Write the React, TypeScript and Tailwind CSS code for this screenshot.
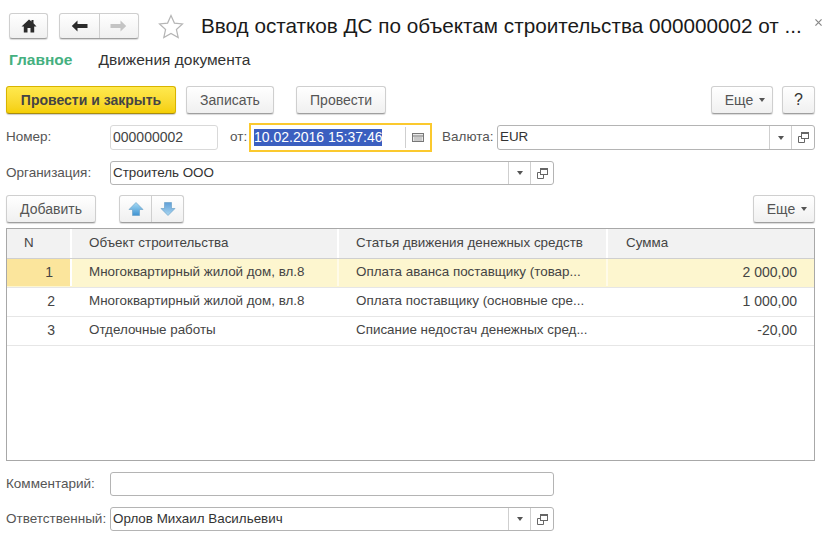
import { ReactNode } from "react";

const btn =
  "flex items-center justify-center h-full rounded-[3px] border border-[#cfcfcf] border-b-[#9f9f9f] bg-gradient-to-b from-white to-[#f0f0f0] shadow-[0_1px_1px_rgba(0,0,0,0.15)] text-[14px] text-[#555]";

const rows = [
  {
    n: "1",
    obj: "Многоквартирный жилой дом, вл.8",
    item: "Оплата аванса поставщику (товар...",
    sum: "2 000,00",
  },
  {
    n: "2",
    obj: "Многоквартирный жилой дом, вл.8",
    item: "Оплата поставщику (основные сре...",
    sum: "1 000,00",
  },
  {
    n: "3",
    obj: "Отделочные работы",
    item: "Списание недостач денежных сред...",
    sum: "-20,00",
  },
];

const Caret = () => (
  <svg width="6" height="4" viewBox="0 0 6 4" className="shrink-0">
    <path d="M0 0h6L3 4z" fill="#555" />
  </svg>
);

const OpenIcon = () => (
  <svg width="13" height="13" viewBox="0 0 13 13" fill="none" stroke="#666">
    <rect x="4.5" y="1.5" width="7" height="6" fill="#fff" />
    <path d="M4.5 2.5h7" />
    <path d="M4.5 5.5h-3v6h6v-4" />
  </svg>
);

const LookupField = ({
  value,
  className,
}: {
  value: string;
  className: string;
}) => (
  <div
    className={`flex h-full rounded-[3px] border border-[#b4b4b4] bg-white text-[13.4px] text-[#333] ${className}`}
  >
    <div className="flex-1 pl-[2px] flex items-center">{value}</div>
    <div className="w-[22px] border-l border-[#cfcfcf] flex items-center justify-center">
      <Caret />
    </div>
    <div className="w-[23px] border-l border-[#cfcfcf] flex items-center justify-center">
      <OpenIcon />
    </div>
  </div>
);

const Label = ({
  children,
  className = "w-[104px]",
}: {
  children: ReactNode;
  className?: string;
}) => (
  <div className={`shrink-0 text-[13.5px] text-[#555] whitespace-nowrap ${className}`}>
    {children}
  </div>
);

const MoreBtn = ({ className }: { className: string }) => (
  <button className={`${btn} gap-[6px] pl-[6px] ${className}`}>
    Еще
    <Caret />
  </button>
);

const BlueArrow = ({ down }: { down?: boolean }) => (
  <svg width="16" height="16" viewBox="0 0 16 16">
    <defs>
      <linearGradient id={down ? "gd" : "gu"} x1="0" y1="0" x2="0" y2="1">
        <stop offset="0" stopColor={down ? "#5f9fd8" : "#a8dcf5"} />
        <stop offset="1" stopColor={down ? "#a9d6f0" : "#3f93d2"} />
      </linearGradient>
    </defs>
    <path
      d={down ? "M4.5 1.5h7v6h3.5L8 14.5 1 7.5h3.5z" : "M8 1.5l7 7h-3.5v6h-7v-6H1z"}
      fill={`url(#${down ? "gd" : "gu"})`}
      stroke="#6fa3c9"
      strokeWidth="0.7"
    />
  </svg>
);

export default function App() {
  return (
    <div
      className="w-[830px] h-[538px] overflow-hidden bg-white flex flex-col pt-[13px]"
      style={{ fontFamily: '"Liberation Sans", Arial, sans-serif' }}
    >
      {/* title bar */}
      <div className="flex items-center h-[26px] pl-[9px] relative">
        <button className={`${btn} w-[39px]`}>
          <svg width="16" height="14" viewBox="0 0 16 14">
            <path d="M8 0.5L0.5 7.5h2.3V13.5h3.7V9h3v4.5h3.7V7.5h2.3L12.5 4.3V1h-2v1.4z" fill="#2b2b2b" />
          </svg>
        </button>
        <div className={`${btn} w-[80px] ml-[11px]`}>
          <div className="flex-1 h-full flex items-center justify-center border-r border-[#cfcfcf]">
            <svg width="17" height="12" viewBox="0 0 17 12">
              <path d="M6.5 0.5L0.8 6l5.7 5.5V8H16.5V4H6.5z" fill="#2b2b2b" />
            </svg>
          </div>
          <div className="flex-1 h-full flex items-center justify-center">
            <svg width="17" height="12" viewBox="0 0 17 12">
              <path d="M10.5 0.5L16.2 6l-5.7 5.5V8H0.5V4H10.5z" fill="#c4c4c4" />
            </svg>
          </div>
        </div>
        <svg width="26" height="25" viewBox="0 0 26 25" className="ml-[19px]" fill="none">
          <path
            d="M13 1.5l3.4 7.6 8.1.9-6.1 5.5 1.8 8.1L13 19.4 5.8 23.6l1.8-8.1L1.5 10l8.1-.9z"
            stroke="#b5b5b5"
            strokeWidth="1.2"
            fill="#fff"
          />
        </svg>
        <div className="ml-[17px] text-[20.7px] text-[#1a1a1a] whitespace-nowrap">
          Ввод остатков ДС по объектам строительства 000000002 от ...
        </div>
        <svg width="7" height="7" viewBox="0 0 8 8" className="absolute left-[815px] top-[6px]">
          <path d="M0.5 0.5l7 7M7.5 0.5l-7 7" stroke="#888" strokeWidth="1.4" />
        </svg>
      </div>

      {/* tabs */}
      <div className="flex items-center h-[24px] mt-[9px] pl-[9px] text-[15.5px]">
        <span className="font-bold text-[#45b07f]">Главное</span>
        <span className="ml-[26px] text-[#333]">Движения документа</span>
      </div>

      {/* command bar */}
      <div className="flex h-[28px] mt-[14px] pl-[6px]">
        <button className="flex items-center justify-center w-[170px] rounded-[3px] border border-[#d8b400] border-b-[#a88c10] bg-gradient-to-b from-[#ffe94d] to-[#f5cf00] shadow-[0_1px_1px_rgba(0,0,0,0.2)] text-[14px] font-bold text-[#444]">
          Провести и закрыть
        </button>
        <button className={`${btn} w-[88px] ml-[10px]`}>Записать</button>
        <button className={`${btn} w-[90px] ml-[22px]`}>Провести</button>
        <MoreBtn className="w-[62px] ml-[325px]" />
        <button className={`${btn} w-[33px] ml-[9px] !text-[16px] !text-[#333]`}>?</button>
      </div>

      {/* number, date, currency */}
      <div className="flex items-center h-[29px] mt-[9px] pl-[6px]">
        <Label>Номер:</Label>
        <div className="w-[108px] h-[25px] flex items-center pl-[2px] rounded-[3px] border border-[#d9d9d9] text-[14px] text-[#444]">
          000000002
        </div>
        <Label className="ml-[12px] w-[19px]">от:</Label>
        <div className="w-[183px] h-[29px] flex border-2 border-[#fbc92e] bg-white text-[14px] text-[#333]">
          <div className="flex-1 flex items-center pl-[3px] border-r border-[#cfcfcf] my-[2px]">
            <span className="bg-[#3b5fc0] text-white leading-[17px]">10.02.2016 15:37:46</span>
          </div>
          <div className="w-[24px] flex items-center justify-center">
            <svg width="12" height="9" viewBox="0 0 12 9">
              <rect x="0.5" y="0.5" width="11" height="8" fill="#e8e8e8" stroke="#777" />
              <path d="M1 3h10" stroke="#777" />
              <path d="M2 5h8M2 7h8" stroke="#aaa" />
            </svg>
          </div>
        </div>
        <Label className="ml-[10px] w-[55px]">Валюта:</Label>
        <div className="h-[25px] w-[318px]">
          <LookupField value="EUR" className="w-full" />
        </div>
      </div>

      {/* organization */}
      <div className="flex items-center h-[24px] mt-[9px] pl-[6px]">
        <Label>Организация:</Label>
        <LookupField value="Строитель ООО" className="w-[444px]" />
      </div>

      {/* table commands */}
      <div className="flex h-[28px] mt-[10px] pl-[6px]">
        <button className={`${btn} w-[90px]`}>Добавить</button>
        <div className={`${btn} w-[65px] ml-[23px]`}>
          <div className="flex-1 h-full flex items-center justify-center border-r border-[#cfcfcf]">
            <BlueArrow />
          </div>
          <div className="flex-1 h-full flex items-center justify-center">
            <BlueArrow down />
          </div>
        </div>
        <MoreBtn className="w-[62px] ml-[569px]" />
      </div>

      {/* table */}
      <div className="w-[809px] h-[233px] mt-[5px] ml-[6px] border border-[#a8a8a8] text-[13.4px] text-[#444]">
        <div className="flex h-[30px] bg-[#f2f2f2] border-b border-[#cfcfcf]">
          <div className="w-[65px] flex items-center pl-[17px] border-r-2 border-white">N</div>
          <div className="w-[267px] flex items-center pl-[17px] border-r-2 border-white">
            Объект строительства
          </div>
          <div className="w-[269px] flex items-center pl-[17px] border-r-2 border-white">
            Статья движения денежных средств
          </div>
          <div className="flex-1 flex items-center pl-[18px]">Сумма</div>
        </div>
        {rows.map((r, i) => (
          <div
            key={r.n}
            className={`flex h-[29px] pb-[1px] border-b border-[#e6e6e6] ${i === 0 ? "bg-[#fdf6cf]" : ""}`}
          >
            <div
              className={`w-[65px] flex items-center justify-end pr-[17px] text-[14px] ${
                i === 0 ? "bg-[#fbe59c] border-r-2 border-white" : ""
              }`}
            >
              {r.n}
            </div>
            <div className={`w-[267px] flex items-center pl-[17px] ${i === 0 ? "border-r-2 border-[#fffbe8]" : ""}`}>
              {r.obj}
            </div>
            <div className={`w-[269px] flex items-center pl-[17px] ${i === 0 ? "border-r-2 border-[#fffbe8]" : ""}`}>
              {r.item}
            </div>
            <div className="flex-1 flex items-center justify-end pr-[17px] text-[14px]">{r.sum}</div>
          </div>
        ))}
      </div>

      {/* comment */}
      <div className="flex items-center h-[24px] mt-[11px] pl-[6px]">
        <Label>Комментарий:</Label>
        <div className="w-[444px] h-full rounded-[3px] border border-[#b4b4b4] bg-white" />
      </div>

      {/* responsible */}
      <div className="flex items-center h-[24px] mt-[11px] pl-[6px]">
        <Label>Ответственный:</Label>
        <LookupField value="Орлов Михаил Васильевич" className="w-[444px]" />
      </div>
    </div>
  );
}
